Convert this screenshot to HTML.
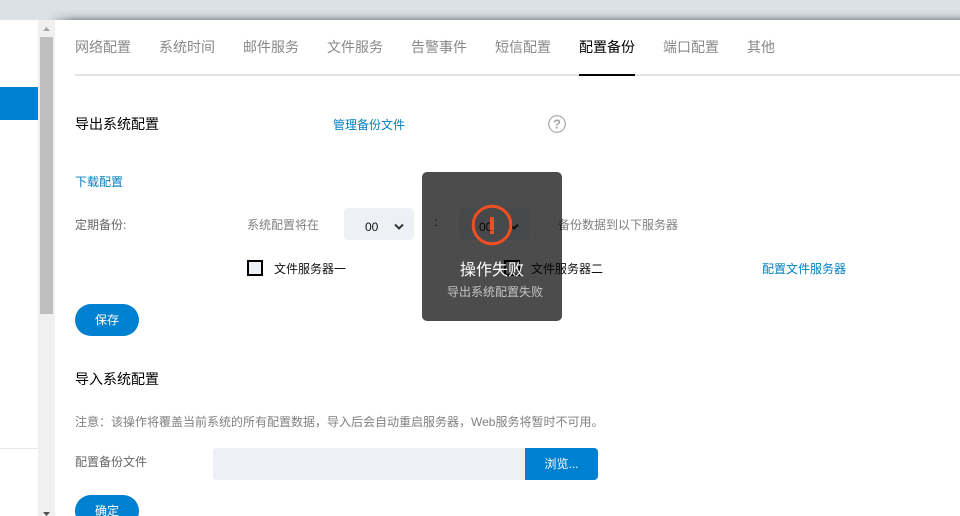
<!DOCTYPE html>
<html lang="zh"><head><meta charset="utf-8"><style>
html,body{margin:0;padding:0;width:960px;height:516px;overflow:hidden;background:#fff}
#w{width:960px;height:516px;overflow:hidden;background:#fff;position:relative;font-family:"Liberation Sans","Noto Sans CJK SC",sans-serif;font-size:12px;color:#666}
.a{position:absolute;white-space:nowrap}
.t{position:absolute;top:37px;font-size:14px;line-height:20px;color:#888;white-space:nowrap}
.sel{position:absolute;background:#edf0f5;border-radius:4px;width:70px;height:32px;top:208px}
.btn{position:absolute;background:#0080d0;color:#fff;border-radius:16px;width:64px;height:32px;line-height:32px;text-align:center;left:75px}
</style></head><body><div id="w">
<div class="a" style="left:0;top:0;width:960px;height:20px;background:#dce1e5"></div>
<div class="a" style="left:48px;top:10px;width:912px;height:10px;background:linear-gradient(to bottom,rgba(120,125,130,0) 0%,rgba(120,125,130,.12) 40%,rgba(120,125,130,.3) 70%,rgba(120,125,130,.7) 100%);-webkit-mask-image:linear-gradient(to right,transparent,#000 25px);mask-image:linear-gradient(to right,transparent,#000 25px)"></div>

<div class="a" style="left:0;top:87px;width:38px;height:33px;background:#0080d0"></div>
<div class="a" style="left:0;top:448px;width:38px;height:1px;background:#e4e8ee"></div>

<div class="a" style="left:38px;top:20px;width:17px;height:496px;background:#f0f0f0"></div>
<div class="a" style="left:40px;top:37px;width:13px;height:277px;background:#bfbfbf"></div>
<svg class="a" style="left:38px;top:20px" width="17" height="17"><path d="M5 11H12L8.500 7Z" fill="#a3a3a3"/></svg>
<svg class="a" style="left:38px;top:499px" width="17" height="17"><path d="M5 13H12L8.500 17Z" fill="#505050"/></svg>

<div class="t" style="left:75px">网络配置</div>
<div class="t" style="left:159px">系统时间</div>
<div class="t" style="left:243px">邮件服务</div>
<div class="t" style="left:327px">文件服务</div>
<div class="t" style="left:411px">告警事件</div>
<div class="t" style="left:495px">短信配置</div>
<div class="t" style="left:579px;color:#000">配置备份</div>
<div class="t" style="left:663px">端口配置</div>
<div class="t" style="left:747px">其他</div>
<div class="a" style="left:75px;top:74px;width:885px;height:2px;background:#e5e5e5"></div>
<div class="a" style="left:579px;top:74px;width:56px;height:2px;background:#000"></div>

<div class="a" style="left:75px;top:114px;font-size:14px;line-height:20px;color:#000">导出系统配置</div>
<div class="a" style="left:333px;top:117px;line-height:17px;color:#0080c0">管理备份文件</div>
<svg class="a" style="left:547px;top:114px" width="20" height="20"><circle cx="10" cy="10" r="8.300" fill="none" stroke="#a6a6a6" stroke-width="1.200"/><text x="10" y="14.500" font-size="13" font-weight="bold" fill="#a6a6a6" text-anchor="middle" font-family="Liberation Sans">?</text></svg>

<div class="a" style="left:75px;top:174px;line-height:17px;color:#0080c0">下载配置</div>

<div class="a" style="left:75px;top:217px;line-height:17px">定期备份:</div>
<div class="a" style="left:247px;top:217px;line-height:17px;color:#808080">系统配置将在</div>
<div class="sel" style="left:344px"></div>
<div class="a" style="left:365px;top:220px;font-size:12px;line-height:15px;color:#111">00</div>
<svg class="a" style="left:394px;top:223px" width="10" height="8"><path d="M1 1.500L5 5.500L9 1.500" fill="none" stroke="#333" stroke-width="2"/></svg>
<div class="a" style="left:434px;top:214px;line-height:17px;color:#333">:</div>
<div class="sel" style="left:459px"></div>
<div class="a" style="left:479px;top:220px;font-size:12px;line-height:15px;color:#111">00</div>
<svg class="a" style="left:509px;top:223px" width="10" height="8"><path d="M1 1.500L5 5.500L9 1.500" fill="none" stroke="#333" stroke-width="2"/></svg>
<div class="a" style="left:558px;top:217px;line-height:17px;color:#808080">备份数据到以下服务器</div>

<div class="a" style="left:247px;top:260px;width:12px;height:12px;border:2px solid #000;background:#edf0f5"></div>
<div class="a" style="left:274px;top:261px;line-height:17px;color:#111">文件服务器一</div>
<div class="a" style="left:504px;top:260px;width:12px;height:12px;border:2px solid #000;background:#edf0f5"></div>
<div class="a" style="left:531px;top:261px;line-height:17px;color:#111">文件服务器二</div>
<div class="a" style="left:762px;top:261px;line-height:17px;color:#0080c0">配置文件服务器</div>

<div class="btn" style="top:304px">保存</div>

<div class="a" style="left:75px;top:369px;font-size:14px;line-height:20px;color:#000">导入系统配置</div>
<div class="a" style="left:75px;top:414px;line-height:17px;color:#808080">注意&#xFF1A;该操作将覆盖当前系统的所有配置数据&#xFF0C;导入后会自动重启服务器&#xFF0C;Web服务将暂时不可用。</div>
<div class="a" style="left:75px;top:454px;line-height:17px">配置备份文件</div>
<div class="a" style="left:213px;top:448px;width:312px;height:32px;background:#edf0f5;border-radius:4px 0 0 4px"></div>
<div class="a" style="left:525px;top:448px;width:73px;height:32px;line-height:32px;text-align:center;background:#0080d0;color:#fff;border-radius:0 4px 4px 0">浏览...</div>
<div class="btn" style="top:495px">确定</div>

<div class="a" style="left:422px;top:172px;width:140px;height:149px;background:rgba(0,0,0,.7);border-radius:5px"></div>
<svg class="a" style="left:471px;top:204px" width="42" height="42"><circle cx="21" cy="21" r="18.800" fill="none" stroke="#f04e23" stroke-width="3"/><rect x="19" y="13" width="4" height="13" fill="#f04e23"/><rect x="19" y="26.500" width="4" height="3.500" fill="#f04e23"/></svg>
<div class="a" style="left:460px;top:260px;font-size:16px;line-height:22px;color:#fff">操作失败</div>
<div class="a" style="left:447px;top:284px;line-height:17px;color:#c4c4c4">导出系统配置失败</div>
</div></body></html>
